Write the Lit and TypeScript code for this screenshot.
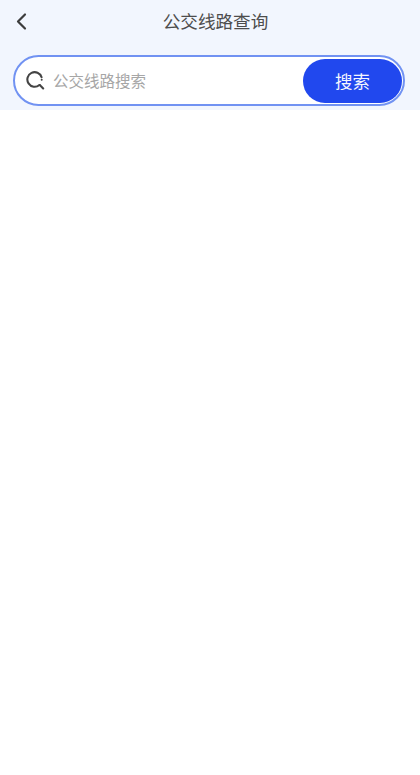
import { LitElement, html, css } from "lit";
import { customElement } from "lit/decorators.js";

@customElement("app-root")
export class AppRoot extends LitElement {
  static styles = css`
    :host {
      display: block;
      width: 420px;
      height: 775px;
      background: #ffffff;
      font-family: "Noto Sans CJK SC", "Noto Sans", sans-serif;
    }
    .head {
      background: #f2f6fe;
      height: 110px;
      box-sizing: border-box;
      padding: 0 15px 0 13px;
      display: flex;
      flex-direction: column;
    }
    .nav {
      height: 55px;
      flex: none;
      display: flex;
      align-items: center;
      justify-content: center;
      position: relative;
      padding: 0 0 11px 13px;
      box-sizing: border-box;
    }
    .back {
      position: absolute;
      left: 2px;
      top: 12px;
      width: 12px;
      height: 19px;
      display: block;
    }
    .title {
      font-size: 17.6px;
      line-height: 24px;
      color: #4d4d4d;
      margin-top: -2px;
    }
    .bar {
      height: 51px;
      box-sizing: border-box;
      border: 2px solid #7192f2;
      border-radius: 26px;
      background: #ffffff;
      display: flex;
      align-items: center;
      padding: 0 1px 0 11px;
    }
    .icon {
      width: 19px;
      height: 19px;
      flex: none;
      display: block;
    }
    .ph {
      margin-left: 8px;
      flex: 1;
      font-size: 15.5px;
      line-height: 20px;
      color: #a6a6a6;
      margin-top: -1px;
    }
    .btn {
      width: 99px;
      height: 44px;
      flex: none;
      border-radius: 22px;
      background: #2148ee;
      color: #f4f6ff;
      font-size: 17.5px;
      display: flex;
      align-items: center;
      justify-content: center;
    }
  `;

  render() {
    return html`
      <div class="head">
        <div class="nav">
          <svg class="back" viewBox="0 0 12 19" fill="none">
            <path d="M10 2.5 L3 9.5 L10 16.5" stroke="#3c3c3c" stroke-width="2.2" stroke-linecap="round" stroke-linejoin="round" />
          </svg>
          <span class="title">公交线路查询</span>
        </div>
        <div class="bar">
          <svg class="icon" viewBox="0 0 19 19" fill="none">
            <path d="M13.4 14 A7.3 7.3 0 1 1 15.6 6.2" stroke="#444" stroke-width="2.1" stroke-linecap="round" />
            <circle cx="15.7" cy="8.8" r="1" fill="#444" />
            <path d="M13.8 14 L17.2 17.4" stroke="#444" stroke-width="2.1" stroke-linecap="round" />
          </svg>
          <span class="ph">公交线路搜索</span>
          <div class="btn">搜索</div>
        </div>
      </div>
    `;
  }
}
